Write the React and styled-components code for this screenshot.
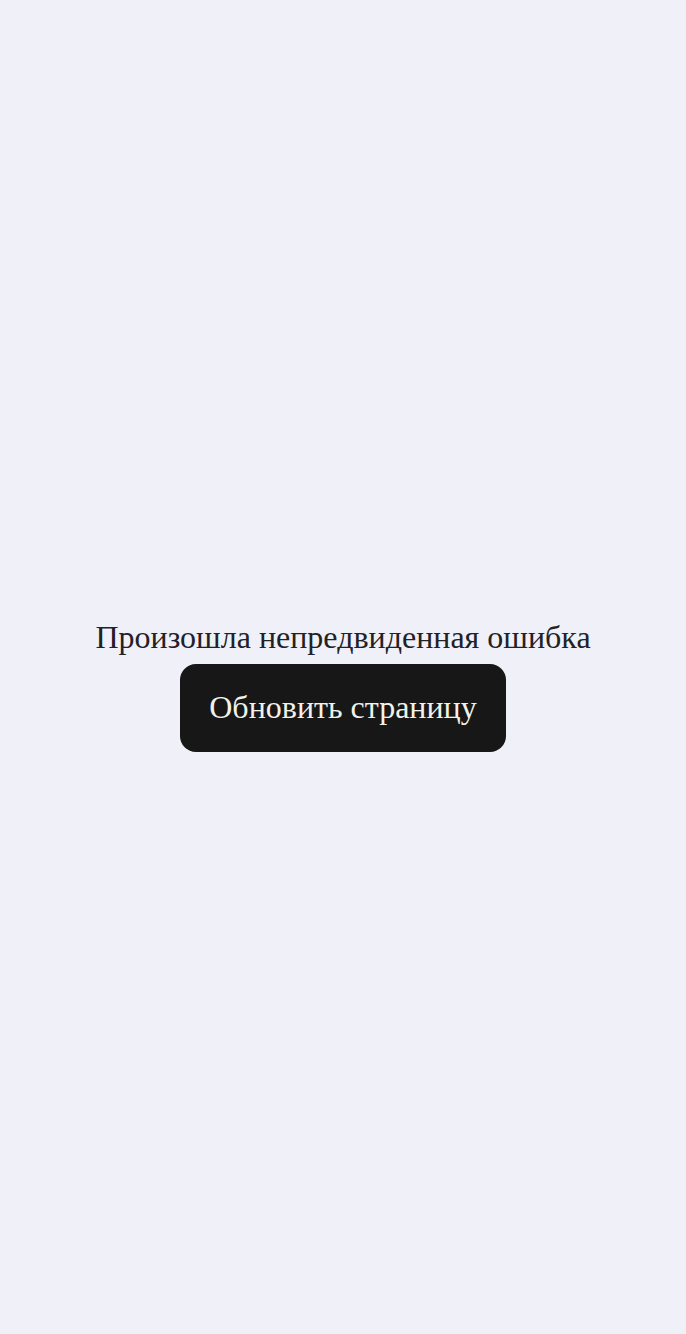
import styled, { createGlobalStyle } from "styled-components";

const GlobalStyle = createGlobalStyle`
    html, body {
        margin: 0;
        padding: 0;
        background: #f0f0f8;
    }
    body {
        font-family: "Liberation Serif", "Times New Roman", serif;
    }
`;

export default function App() {
    return (
        <>
            <GlobalStyle />
            <PageStyled>
                <TitleStyled>Произошла непредвиденная ошибка</TitleStyled>
                <ButtonStyled onClick={() => window.location.reload()}>
                    Обновить страницу
                </ButtonStyled>
            </PageStyled>
        </>
    );
}

const PageStyled = styled.div`
    min-height: 100vh;
    box-sizing: border-box;
    padding-top: 37px;
    display: flex;
    flex-direction: column;
    align-items: center;
    justify-content: center;
    gap: 8px;
`;

const TitleStyled = styled.div`
    font-size: 32px;
    color: #222226;
`;

const ButtonStyled = styled.button`
    font-family: inherit;
    font-size: 32px;
    color: #f2f2ea;
    background: #171717;
    border: none;
    border-radius: 16px;
    padding: 25px 29px 26px;
    cursor: pointer;
`;
